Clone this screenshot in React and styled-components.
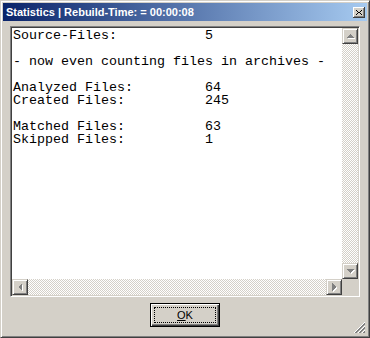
import styled, { createGlobalStyle } from 'styled-components';

const Global = createGlobalStyle`
  html, body { margin: 0; padding: 0; background: #d4d0c8; }
  * { box-sizing: border-box; }
`;

const Window = styled.div`
  position: relative;
  width: 370px;
  height: 338px;
  background: #d4d0c8;
  border: 1px solid;
  border-color: #d4d0c8 #404040 #404040 #d4d0c8;
  box-shadow: inset 1px 1px #ffffff, inset -1px -1px #808080;
  padding: 2px;
  display: flex;
  flex-direction: column;
`;

const TitleBar = styled.div`
  height: 18px;
  display: flex;
  align-items: center;
  justify-content: space-between;
  padding: 0 2px 0 3px;
  background: linear-gradient(to right, #0a246a, #a6caf0);
`;

const Title = styled.span`
  color: #ffffff;
  font-family: "Liberation Sans", Arial, sans-serif;
  font-weight: bold;
  font-size: 11px;
  white-space: nowrap;
`;

const CloseButton = styled.div`
  width: 12px;
  height: 11px;
  background: #d4d0c8;
  box-shadow: inset -1px -1px #404040, inset 1px 1px #ffffff, inset -2px -2px #808080;
  display: flex;
  align-items: center;
  justify-content: center;
`;

const Body = styled.div`
  flex: 1;
  display: flex;
  flex-direction: column;
  align-items: center;
  padding: 5px 7px 0;
`;

const Edit = styled.div`
  width: 350px;
  height: 271px;
  border: 1px solid;
  border-color: #808080 #ffffff #ffffff #808080;
  box-shadow: inset 1px 1px #404040, inset -1px -1px #d4d0c8;
  padding: 1px;
  display: grid;
  grid-template-columns: 1fr 16px;
  grid-template-rows: 1fr 16px;
`;

const TextArea = styled.pre`
  margin: 0;
  background: #ffffff;
  padding: 1px 0 0 1px;
  font-family: "Liberation Mono", "Courier New", monospace;
  font-size: 13.33px;
  line-height: 13px;
  color: #000000;
  overflow: hidden;
`;

const Track = styled.div`
  display: flex;
  flex-direction: ${p => (p.$vertical ? 'column' : 'row')};
  justify-content: space-between;
  background: repeating-conic-gradient(#d4d0c8 0 25%, #ffffff 0 50%) 0 0 / 2px 2px;
`;

const ScrollButton = styled.div`
  width: 16px;
  height: 16px;
  flex: none;
  background: #d4d0c8;
  border: 1px solid;
  border-color: #d4d0c8 #404040 #404040 #d4d0c8;
  box-shadow: inset 1px 1px #ffffff, inset -1px -1px #808080;
  display: flex;
  align-items: center;
  justify-content: center;
`;

const Corner = styled.div`
  background: #d4d0c8;
`;

const ButtonRow = styled.div`
  margin-top: 6px;
  display: flex;
  justify-content: center;
`;

const PushButton = styled.div`
  width: 70px;
  height: 24px;
  border: 1px solid #000000;
  background: #d4d0c8;
  box-shadow: inset 1px 1px #ffffff, inset -1px -1px #404040, inset -2px -2px #808080;
  padding: 3px;
  display: flex;
`;

const Focus = styled.div`
  flex: 1;
  border: 1px dotted #000000;
  display: flex;
  align-items: center;
  justify-content: center;
  font-family: "Liberation Sans", Arial, sans-serif;
  font-size: 11px;
  color: #000000;
  u { text-decoration: underline; text-underline-offset: 1px; }
`;

const Grip = styled.svg`
  position: absolute;
  right: 3px;
  bottom: 3px;
`;

const Arrow = ({ dir }) => {
  const pts = {
    up: '4,6 8,2 12,6',
    down: '4,2 12,2 8,6',
    left: '6,4 2,8 6,12',
    right: '2,4 2,12 6,8',
  }[dir];
  const size = dir === 'up' || dir === 'down' ? { w: 14, h: 8 } : { w: 8, h: 14 };
  const vb = dir === 'up' || dir === 'down' ? '1 0 14 8' : '0 1 8 14';
  return (
    <svg width={size.w} height={size.h} viewBox={vb} shapeRendering="crispEdges">
      <polygon points={pts} fill="#ffffff" transform="translate(1,1)" />
      <polygon points={pts} fill="#808080" />
    </svg>
  );
};

const lines = [
  'Source-Files:           5',
  '',
  '- now even counting files in archives -',
  '',
  'Analyzed Files:         64',
  'Created Files:          245',
  '',
  'Matched Files:          63',
  'Skipped Files:          1',
];

export default function App() {
  return (
    <>
      <Global />
      <Window>
        <TitleBar>
          <Title>Statistics | Rebuild-Time: = 00:00:08</Title>
          <CloseButton>
            <svg width="6" height="5" viewBox="0 0 6 5" shapeRendering="crispEdges">
              <path d="M0 0h1v1H0zM5 0h1v1H5zM1 1h1v1H1zM4 1h1v1H4zM2 2h2v1H2zM1 3h1v1H1zM4 3h1v1H4zM0 4h1v1H0zM5 4h1v1H5z" fill="#000" />
            </svg>
          </CloseButton>
        </TitleBar>
        <Body>
          <Edit>
            <TextArea>{lines.join('\n')}</TextArea>
            <Track $vertical>
              <ScrollButton><Arrow dir="up" /></ScrollButton>
              <ScrollButton><Arrow dir="down" /></ScrollButton>
            </Track>
            <Track>
              <ScrollButton><Arrow dir="left" /></ScrollButton>
              <ScrollButton><Arrow dir="right" /></ScrollButton>
            </Track>
            <Corner />
          </Edit>
          <ButtonRow>
            <PushButton>
              <Focus><span><u>O</u>K</span></Focus>
            </PushButton>
          </ButtonRow>
        </Body>
        <Grip width="12" height="12" viewBox="0 0 12 12" shapeRendering="crispEdges">
          <path d="M11 0L0 11M11 4L4 11M11 8L8 11" stroke="#ffffff" strokeWidth="1" />
          <path d="M11 1L1 11M11 2L2 11M11 5L5 11M11 6L6 11M11 9L9 11M11 10L10 11" stroke="#808080" strokeWidth="1" />
        </Grip>
      </Window>
    </>
  );
}
